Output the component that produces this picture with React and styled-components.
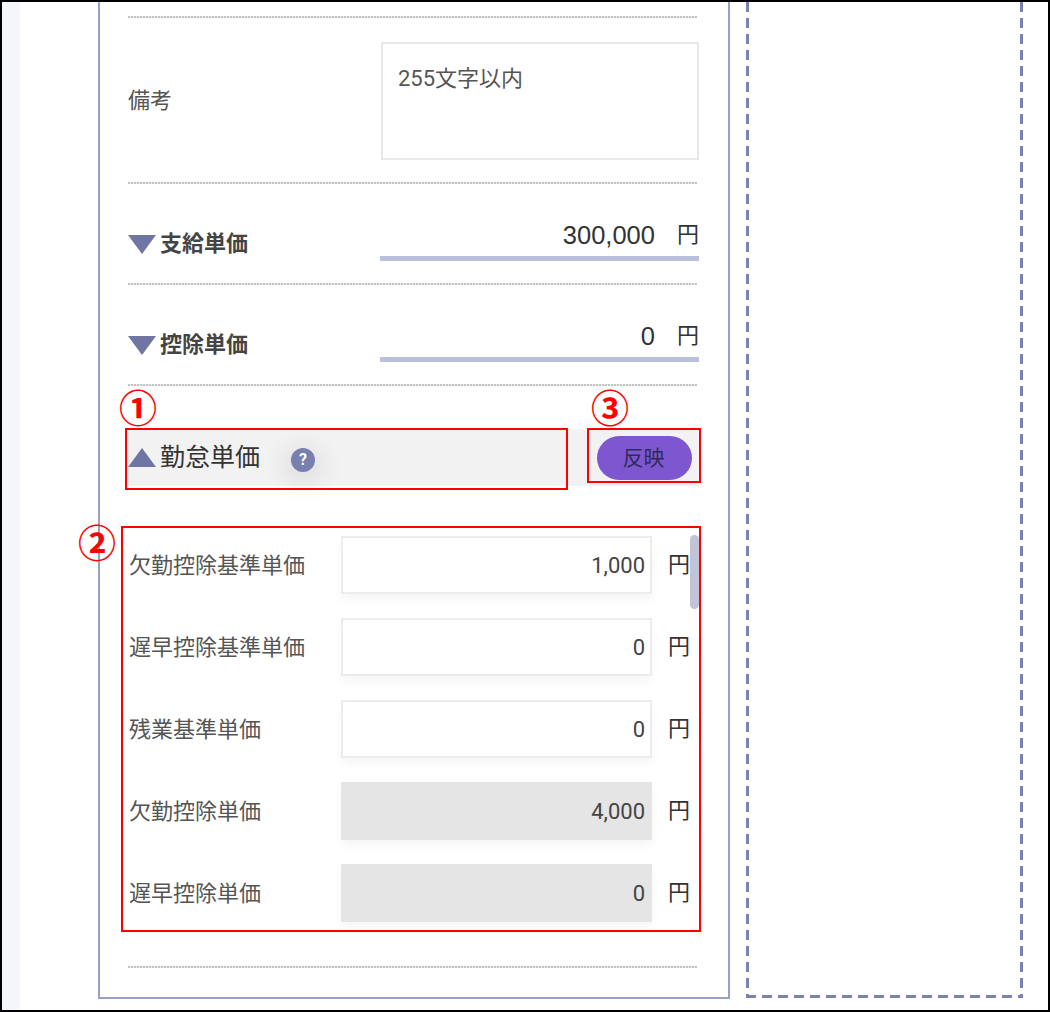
import React from "react";
import styled, { createGlobalStyle } from "styled-components";

const GlobalStyle = createGlobalStyle`
  html, body {
    margin: 0;
    padding: 0;
    background: #fff;
  }
  body {
    font-family: "Roboto", "Noto Sans CJK JP", sans-serif;
    color: #444;
  }
`;

const Frame = styled.div`
  position: relative;
  box-sizing: border-box;
  width: 1050px;
  height: 1012px;
  border: 2px solid #000;
  display: flex;
  overflow: hidden;
  background: #fff;
`;

const Sidebar = styled.div`
  width: 18px;
  flex-shrink: 0;
  background: #f4f6fb;
`;

const Card = styled.div`
  box-sizing: border-box;
  width: 632px;
  height: 997px;
  margin-left: 78px;
  padding: 14px 29px 0 28px;
  border: solid #98a0c8;
  border-width: 0 2px 2px 2px;
  flex-shrink: 0;
`;

const DropZone = styled.div`
  width: 277px;
  height: 996px;
  margin-left: 16px;
  flex-shrink: 0;
  background:
    repeating-linear-gradient(180deg, #7a82b0 0 10px, transparent 10px 16px) left top / 3px 100% no-repeat,
    repeating-linear-gradient(180deg, #7a82b0 0 10px, transparent 10px 16px) right top / 3px 100% no-repeat,
    repeating-linear-gradient(90deg, #7a82b0 0 10px, transparent 10px 16px) left bottom / 100% 3px no-repeat;
`;

const Divider = styled.div`
  height: 2px;
  background: repeating-linear-gradient(90deg, #c4c4c4 0 2px, #eeeeee 2px 3px);
  margin-right: 2px;
`;

const MemoRow = styled.div`
  display: flex;
  align-items: center;
  justify-content: space-between;
  padding: 24px 0 22px;
`;

const Label = styled.div`
  font-size: 22px;
  line-height: 30px;
  color: #555;
  white-space: nowrap;
`;

const MemoBox = styled.div`
  box-sizing: border-box;
  width: 318px;
  height: 118px;
  padding: 18px 15px;
  border: 2px solid #e8e8e8;
  font-size: 22px;
  line-height: 34px;
  color: #555;
`;

const SummaryRow = styled.div`
  display: flex;
  align-items: flex-end;
  justify-content: space-between;
  height: 99px;
  padding-bottom: 22px;
  box-sizing: border-box;
`;

const SummaryTitle = styled.div`
  display: flex;
  align-items: center;
  gap: 4px;
  font-size: 22px;
  line-height: 30px;
  font-weight: 700;
  color: #444;
  margin-bottom: 2px;
`;

const SummaryField = styled.div`
  box-sizing: border-box;
  width: 319px;
  height: 44px;
  display: flex;
  align-items: center;
  justify-content: flex-end;
  gap: 22px;
  border-bottom: 5px solid #b9c0d9;
  padding-bottom: 4px;
`;

const SummaryValue = styled.span`
  font-family: "Liberation Sans", sans-serif;
  font-size: 25.5px;
  color: #333;
  margin-top: 1px;
`;

const Yen = styled.span`
  font-size: 22px;
  line-height: 30px;
  color: #333;
`;

const AttendanceHeader = styled.div`
  display: flex;
  align-items: center;
  justify-content: space-between;
  height: 57px;
  margin: 43px 0 0 -1px;
  padding-right: 7px;
  background: #f2f2f2;
`;

const HeaderLeft = styled.div`
  display: flex;
  align-items: center;
  gap: 4px;
  padding-left: 1px;
`;

const HeaderTitle = styled.div`
  font-size: 25px;
  line-height: 34px;
  color: #333;
  margin-top: 1px;
`;

const HelpIcon = styled.div`
  width: 24px;
  height: 24px;
  margin: 4px 0 0 27px;
  border-radius: 50%;
  background: #7880b0;
  color: #fff;
  font-size: 16px;
  font-weight: 700;
  line-height: 24px;
  text-align: center;
  box-shadow: 0 6px 24px 8px rgba(0, 0, 0, 0.08);
`;

const ReflectButton = styled.button`
  width: 95px;
  height: 44px;
  border: none;
  border-radius: 22px;
  background: #7e57d0;
  color: #2f2a58;
  font-family: "Noto Sans CJK JP", sans-serif;
  font-size: 21px;
  padding: 0 2px 3px 0;
`;

const ScrollArea = styled.div`
  position: relative;
  height: 410px;
  margin-top: 50px;
  display: flex;
  flex-direction: column;
  gap: 24px;
`;

const PriceRow = styled.div`
  display: flex;
  align-items: center;
  height: 58px;
  flex-shrink: 0;
`;

const PriceLabel = styled(Label)`
  width: 212px;
  margin: 2px 0 0 1px;
`;

const PriceInput = styled.div`
  box-sizing: border-box;
  width: 311px;
  height: 58px;
  padding-right: ${({ $disabled }) => ($disabled ? "7px" : "5px")};
  display: flex;
  align-items: center;
  justify-content: flex-end;
  font-size: 22px;
  color: #444;
  background: ${({ $disabled }) => ($disabled ? "#e5e5e5" : "#fff")};
  border: ${({ $disabled }) => ($disabled ? "none" : "2px solid #ececec")};
  box-shadow: 0 6px 10px rgba(0, 0, 0, 0.04);
`;

const PriceYen = styled(Yen)`
  margin-left: 16px;
`;

const ScrollThumb = styled.div`
  position: absolute;
  top: -1px;
  right: 0;
  width: 9px;
  height: 74px;
  border-radius: 5px;
  background: #c0c4d8;
`;

const BottomDivider = styled(Divider)`
  margin-top: 20px;
`;

const RedBox = styled.div`
  position: absolute;
  box-sizing: border-box;
  left: ${({ $x }) => $x - 2}px;
  top: ${({ $y }) => $y - 2}px;
  width: ${({ $w }) => $w}px;
  height: ${({ $h }) => $h}px;
  border: 2px solid #f00;
  pointer-events: none;
`;

const Marker = styled.div`
  position: absolute;
  left: ${({ $x }) => $x - 2}px;
  top: ${({ $y }) => $y - 2}px;
  width: 40px;
  text-align: center;
  font-family: "Noto Sans CJK JP", sans-serif;
  font-size: 38px;
  font-weight: 700;
  line-height: 40px;
  color: #f00;
`;

const ArrowSvg = styled.svg`
  display: block;
  width: 28px;
  height: 19px;
  flex-shrink: 0;
`;

const Arrow = ({ up }) => (
  <ArrowSvg viewBox="0 0 28 19">
    <polygon
      points={up ? "14,0 28,19 0,19" : "0,0 28,0 14,19"}
      fill="#6f76a3"
    />
  </ArrowSvg>
);

const prices = [
  { label: "欠勤控除基準単価", value: "1,000" },
  { label: "遅早控除基準単価", value: "0" },
  { label: "残業基準単価", value: "0" },
  { label: "欠勤控除単価", value: "4,000", disabled: true },
  { label: "遅早控除単価", value: "0", disabled: true },
];

const summaries = [
  { title: "支給単価", value: "300,000" },
  { title: "控除単価", value: "0" },
];

export default function App() {
  return (
    <>
      <GlobalStyle />
      <Frame>
        <Sidebar />
        <Card>
          <Divider />
          <MemoRow>
            <Label>備考</Label>
            <MemoBox>255文字以内</MemoBox>
          </MemoRow>
          <Divider />
          {summaries.map((s) => (
            <React.Fragment key={s.title}>
              <SummaryRow>
                <SummaryTitle>
                  <Arrow />
                  {s.title}
                </SummaryTitle>
                <SummaryField>
                  <SummaryValue>{s.value}</SummaryValue>
                  <Yen>円</Yen>
                </SummaryField>
              </SummaryRow>
              <Divider />
            </React.Fragment>
          ))}
          <AttendanceHeader>
            <HeaderLeft>
              <Arrow up />
              <HeaderTitle>勤怠単価</HeaderTitle>
              <HelpIcon>?</HelpIcon>
            </HeaderLeft>
            <ReflectButton>反映</ReflectButton>
          </AttendanceHeader>
          <ScrollArea>
            {prices.map((p) => (
              <PriceRow key={p.label}>
                <PriceLabel>{p.label}</PriceLabel>
                <PriceInput $disabled={p.disabled}>{p.value}</PriceInput>
                <PriceYen>円</PriceYen>
              </PriceRow>
            ))}
            <ScrollThumb />
          </ScrollArea>
          <BottomDivider />
        </Card>
        <DropZone />
        <Marker $x={118} $y={386}>①</Marker>
        <Marker $x={77} $y={521}>②</Marker>
        <Marker $x={590} $y={386}>③</Marker>
        <RedBox $x={125} $y={428} $w={443} $h={62} />
        <RedBox $x={587} $y={428} $w={114} $h={55} />
        <RedBox $x={121} $y={526} $w={580} $h={406} />
      </Frame>
    </>
  );
}
